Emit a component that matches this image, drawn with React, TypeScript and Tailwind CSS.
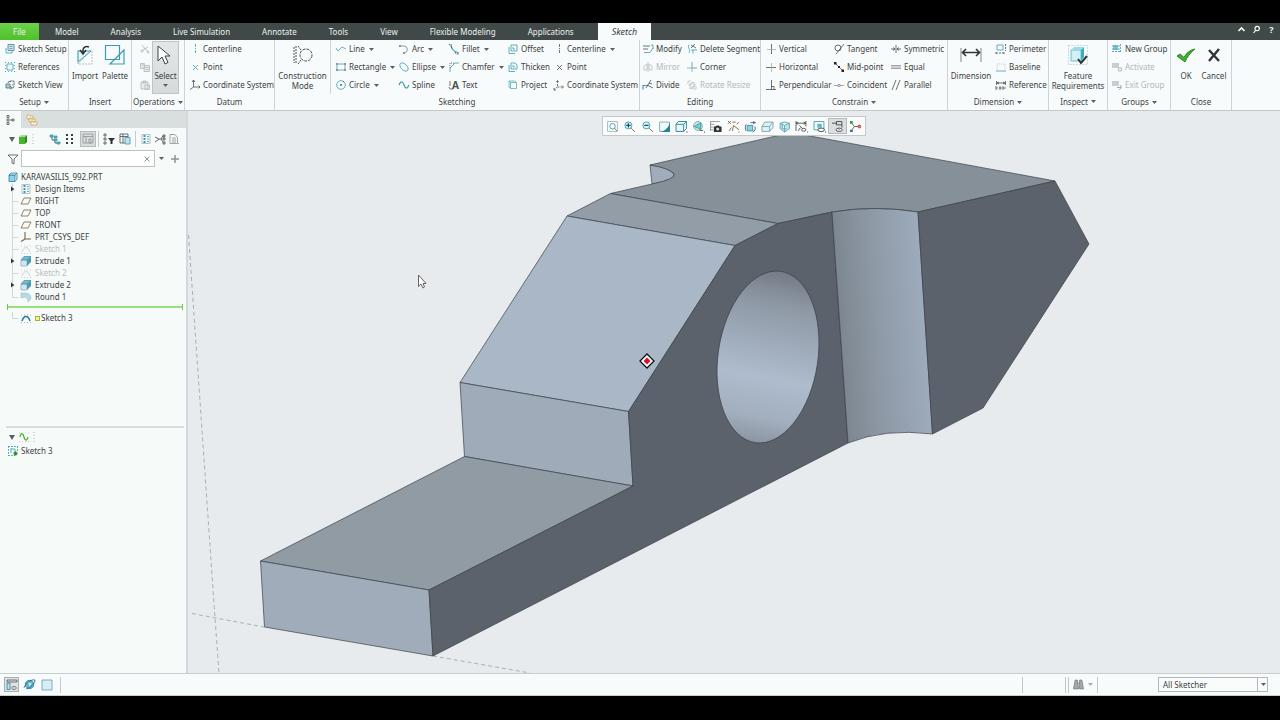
import { ReactNode, useState } from "react";
import clsx from "clsx";

const TEAL = "#3a9db3";
const INK = "#4a5052";
const PALE = "#b9bfc1";

const icons: Record<string, ReactNode> = {
  setup: (
    <g stroke="#54788a">
      <path d="M3 .5h6v6H3z" fill="#cfe6ee" />
      <path d="M1 4v5h6V7M4.500 2.500h3M4.500 4.500h3" stroke={TEAL} />
    </g>
  ),
  references: (
    <g stroke={TEAL}>
      <path d="M2 2h6v6H2z" />
      <path d="M0 9.500h10M.500 0v10M9.500 0v10M0 .500h10" strokeDasharray="1 2" />
    </g>
  ),
  sketchView: (
    <g stroke="#4b6f80">
      <path d="M1 4h4v4H1z" fill="#a9d3e0" />
      <path d="M5 1h4v4H7" />
      <path d="M3 3c0-2 2-2 3-1M7 8c2 0 2-1 2-2M5 6l2 2-2 1" stroke={INK} />
    </g>
  ),
  cut: <path d="M2 1l5 6M8 3L3 6M3 7a1 1 0 1 1-2 0a1 1 0 1 1 2 0M9 8a1 1 0 1 1-2 0a1 1 0 1 1 2 0" stroke="#a9aeb0" />,
  copy: <path d="M.500 1.500h4v5h-4zM5 3.500h4.500v6H4V5M5.500 5.500h3M5.500 7.500h3M2 3h2" stroke="#b3b8ba" fill="#e5e8e8" />,
  paste: <path d="M1 2h7v7H1zM3 1h3v2H3zM5 5h4.500v4.500H5z" stroke="#b3b8ba" fill="#e8ebeb" />,
  datumLine: <path d="M5.500 0v10" stroke={TEAL} strokeDasharray="3 1 1 1" />,
  datumPoint: <path d="M3 3l5 5M8 3L3 8" stroke={TEAL} />,
  csys: (
    <g stroke={INK}>
      <path d="M3.500 0v7H10M3.500 7L0 9.500" />
      <path d="M2 2l1.500-2L5 2M8.500 5.500L10 7 8.500 8.500" />
    </g>
  ),
  csysDots: (
    <g stroke={INK}>
      <path d="M3.500 1v6H9M3.500 7L0 9.500" strokeDasharray="2 1" />
      <path d="M2.500 2l1-1.500L4.500 2M8 5.500L9.500 7 8 8.500M0 8v2h2" />
    </g>
  ),
  line: <path d="M0 4l2 3 4-4 4 2" stroke={TEAL} />,
  rectangle: (
    <g>
      <path d="M1 2h8v6H1z" stroke={TEAL} />
      <path d="M0 1h2v2H0zM8 1h2v2H8zM0 7h2v2H0zM8 7h2v2H8z" fill="#8d999c" />
    </g>
  ),
  circle: (
    <g stroke={TEAL}>
      <circle cx="5" cy="5" r="4.300" />
      <path d="M4 5h2M5 4v2M7 2l1-1" stroke={INK} />
    </g>
  ),
  arc: (
    <g>
      <path d="M1.500 2H5a3.500 3.500 0 0 1 1 6.800" stroke="#5b8c97" />
      <path d="M0 1h2v2H0zM4 8h2v2H4z" fill="#8d999c" />
    </g>
  ),
  ellipse: <ellipse cx="5" cy="5" rx="5" ry="3" transform="rotate(45 5 5)" stroke={TEAL} />,
  spline: <path d="M0 5c2-5 4-3 5 0s3 5 5 0" stroke={TEAL} strokeWidth="1.200" />,
  fillet: (
    <g>
      <path d="M2 0c0 5 3 8 8 9" stroke={TEAL} strokeWidth="1.100" />
      <path d="M0 0l3 4M6 8l1 2h3" stroke={INK} strokeDasharray="2 1" />
    </g>
  ),
  chamfer: (
    <g>
      <path d="M1 10V6l5-5h4" stroke={TEAL} />
      <path d="M1 6V1h5" stroke={INK} strokeDasharray="1 1" />
    </g>
  ),
  text: (
    <g>
      <path d="M1 1v5M1 9h3M0 7l1 2" stroke={INK} />
      <text x="3" y="9" fontSize="10" fontWeight="700" fill={INK}>
        A
      </text>
    </g>
  ),
  offset: <path d="M3 1h6v6H3zM1 3v6.500h6M5 3v2h2" stroke={TEAL} />,
  thicken: <path d="M3 1h4a3 3 0 0 1 2 3v3H3zM1 3v6.500h6M5 3v2h2" stroke={TEAL} />,
  project: <path d="M2.500 2.500h6v6h-6zM2.500 2.500L1 1h6l1.500 1.500M1 1v6l1.500 1.500" stroke="#5bb3b3" />,
  centerline: <path d="M5.500 0v10" stroke={INK} strokeDasharray="3 1 1 1" />,
  point: <path d="M3 3l5 5M8 3L3 8" stroke={INK} />,
  modify: (
    <g>
      <path d="M0 2h7M0 5h5" stroke={INK} />
      <path d="M1 8.500h6L10 4M8 1h2v4" stroke={TEAL} />
    </g>
  ),
  mirror: <path d="M5 0v10M4 2L1 4v4h3zM6 2l3 2v4H6z" stroke={PALE} />,
  divide: (
    <g>
      <path d="M0 9.500v-4h4" stroke={TEAL} strokeWidth="1.200" />
      <path d="M3 8L8 0M4 5l6 3M6 3l3 1" stroke={INK} />
    </g>
  ),
  deleteSegment: (
    <g>
      <path d="M2 1c-2 3 2 4 0 8M4 6h6M6 9.500V6" stroke={TEAL} />
      <path d="M4 4l4-4M4 1l5 3" stroke={INK} />
    </g>
  ),
  corner: (
    <g>
      <path d="M5 6V0M5 6h5" stroke={TEAL} />
      <path d="M0 6h5v4" stroke="#8aa1a6" />
    </g>
  ),
  rotateResize: <path d="M1 1h3M1 1v3M9 9H6M9 9V6M2 6a4 4 0 0 1 6-3M8 4a4 4 0 0 1-6 4M3 4h4v3H3z" stroke={PALE} />,
  vertical: (
    <g>
      <path d="M5.500 0v10" stroke={INK} />
      <path d="M1 5.500h9" stroke="#a5abad" />
    </g>
  ),
  horizontal: (
    <g>
      <path d="M0 5.500h10" stroke={INK} />
      <path d="M5.500 1v9" stroke="#a5abad" />
    </g>
  ),
  perpendicular: <path d="M0 9.500h10M5.500 0v9.500M5 6.500h3v3" stroke={INK} />,
  tangent: (
    <g stroke={INK}>
      <circle cx="4" cy="4" r="3" />
      <path d="M2 10L10 0" />
    </g>
  ),
  midPoint: (
    <g>
      <path d="M1 1l8 8" stroke={INK} />
      <path d="M0 0h2.500v2.500H0zM4 4h2v2H4zM7.500 7.500H10V10H7.500z" fill="#222" />
    </g>
  ),
  coincident: <path d="M0 5.500h4M6 5.500h4M4 4.500h2v2H4z" stroke="#8a9092" />,
  symmetric: <path d="M5 1v8M0 5h4M10 5H6M2 3.500l2 1.500-2 1.500M8 3.500L6 5l2 1.500" stroke={INK} />,
  equal: <path d="M0 3.500h10M0 6.500h10M0 5h10" stroke="#8c9294" />,
  parallel: <path d="M1 10L5 0M5 10L9 0" stroke={INK} />,
  perimeter: (
    <g>
      <path d="M1 1h6v5H1z" stroke={TEAL} />
      <path d="M0 9h8M9.500 0v7M0 8v2M8 8v2" stroke={INK} strokeDasharray="2 1" />
    </g>
  ),
  baseline: (
    <g>
      <path d="M0 9h10" stroke={TEAL} />
      <path d="M1 8V2h8v6" stroke="#b4babc" strokeDasharray="1 1" />
    </g>
  ),
  reference: (
    <g stroke={INK}>
      <path d="M.500 1v4M9.500 1v4M1 3h8M3 2L1 3l2 1M7 2l2 1-2 1" />
      <path d="M0 8h2M3 8h3M7 8h3M0 6v4M4 6v4M7 6v4" />
    </g>
  ),
  newGroup: (
    <g>
      <path d="M1 1h5v5H1z" fill="#7cc4d6" />
      <path d="M0 7.500h8M8.500 0v9M0 2h8M0 5h8" stroke={TEAL} strokeDasharray="2 1" />
    </g>
  ),
  activate: (
    <g>
      <path d="M0 1h7v5H0z" fill="#c9cdcf" />
      <circle cx="8" cy="7.500" r="1.700" stroke="#999fa1" />
    </g>
  ),
  exitGroup: (
    <g>
      <path d="M0 1h7v5H0z" fill="#c9cdcf" />
      <path d="M5 7.500h4M9 5v3L7 10" stroke="#8f9597" />
    </g>
  ),
  structure: <path d="M1 .500h2v2H1zM1 4h2v2H1zM1 7.500h2v2H1zM6 4h2v2H6zM4 5h2" stroke={INK} />,
  folders: <path d="M0 0h2l1 1h3v3H0zM2 3h2l1 1h3v3H2zM4 6h2l1 1h3v3H4z" stroke="#c9a96a" fill="#fff3d6" />,
  greenBox: (
    <g>
      <path d="M1 3h6v7H1z" fill="#4bb42d" />
      <path d="M1 3l2-2h6L7 3z" fill="#a5df8e" />
      <path d="M7 3l2-2v7l-2 2z" fill="#2f8a1c" />
    </g>
  ),
  dots: <path d="M5 0v10" stroke="#9ba1a3" strokeDasharray="1 2" />,
  tree: (
    <g>
      <path d="M0 1h3v2H0zM4 2h3v2H4zM4 5h3v2H4zM7 8h3v2H7z" fill="#5cb5aa" stroke={TEAL} />
      <path d="M2 3v3h2M5 7v2h2" stroke={INK} />
    </g>
  ),
  bullets: <path d="M1 0h2v2H1zM1 4h2v2H1zM1 8h2v2H1zM6 0h2v2H6zM6 4h2v2H6zM6 8h2v2H6z" fill="#393e40" />,
  columns: <path d="M0 0h10v9H0zM0 2.500h10M3 2.500V9M6 5h2v4H6z" stroke="#8f9597" />,
  treeFilter: (
    <g>
      <path d="M0 0h2v2H0zM0 4h2v2H0zM0 8h2v2H0z" stroke={INK} />
      <path d="M4 4h7L8.500 7v3h-2V7z" fill="#333" />
    </g>
  ),
  treeColumns: (
    <g>
      <path d="M0 0h8v9H0zM0 2.500h8M3 0v9" stroke={INK} />
      <path d="M5 3.500h5V10H5z" fill="#bfe4ee" stroke={TEAL} />
    </g>
  ),
  design: (
    <g>
      <path d="M1 .500h8v9H1z" stroke="#a8b4b8" />
      <path d="M3.500 1v8" stroke={TEAL} strokeWidth="2" strokeDasharray="2 1" />
      <path d="M6 2.500h2M6 5h2M6 7.500h2" stroke={TEAL} />
    </g>
  ),
  network: <path d="M0 3l4 2-4 3M4 5h2M6 5l2-3M6 5l2 3M8 1h2v2H8zM8 4h2v2H8zM8 8h2v2H8z" stroke="#3e4345" />,
  page: <path d="M1 .500h5l2.500 3v6H1zM3 4h4M3 6h4M3 8h4M9 9.500h1" stroke="#8b9193" />,
  part: (
    <g stroke="#2c7fa6">
      <path d="M1 3h6v6.500H1z" fill="#8fd0ea" />
      <path d="M1 3l2-2h6L7 3zM9 1v6L7 9.500" fill="#d7f0f8" />
    </g>
  ),
  plane: <path d="M3 2h7L7 8H0z" stroke="#7b6647" />,
  sysTree: <path d="M4 0v7h6M4 7L0 9.500" stroke="#7b6647" strokeWidth="1.100" />,
  sketchOff: (
    <g stroke="#bfc5c5">
      <path d="M1 8c2-6 6-6 8 0" />
      <path d="M0 2h10M0 9.500h10" strokeDasharray="1 2" />
    </g>
  ),
  sketchOn: (
    <g>
      <path d="M1 8c2-6 6-6 8 0" stroke="#2377a8" strokeWidth="1.500" />
      <path d="M0 2h10M0 9.500h10" stroke="#9aa3a6" strokeDasharray="1 2" />
    </g>
  ),
  extrude: (
    <g>
      <path d="M0 4h6v6H0z" fill="#d3e6ef" stroke="#93b0bd" />
      <path d="M0 4l3-3.500h7L6 4z" fill="#66bdd6" stroke="#5f93a8" />
      <path d="M6 4l4-3.500V6l-4 4z" fill="#4a9bb5" />
    </g>
  ),
  round: <path d="M0 1h4c4 0 6 2 6 6L7 10c0-3-1-4-3-5L0 6z" fill="#b5dbea" stroke="#9bb4c0" strokeWidth="0.500" />,
  curve: (
    <g>
      <path d="M1 5c1-5 3-4 4 0s3 4 4 0" stroke="#45b02d" strokeWidth="1.200" />
      <path d="M0 1h10M0 9.500h10" stroke="#b5bcbc" strokeDasharray="1 2" />
    </g>
  ),
  sketchNew: (
    <g>
      <path d="M0 .500h10M0 9.500h7M.500 0v10M9.500 0v6" stroke={TEAL} strokeDasharray="2 1" />
      <path d="M3 2v5M3 3h4v3" stroke={TEAL} />
      <path d="M7.500 5.500v4M5.500 7.500h4" stroke="#2d8a1a" strokeWidth="2" />
    </g>
  ),
  funnel: <path d="M0 1h10L6 5v5L4 9V5z" stroke={INK} />,
  refit: (
    <g>
      <path d="M.500 .500h9v9h-9z" stroke="#a3b4b9" />
      <circle cx="5" cy="4.800" r="2.500" stroke={TEAL} />
      <path d="M6.800 6.600L9 9" stroke="#84643b" />
    </g>
  ),
  zoomIn: (
    <g>
      <circle cx="4" cy="4" r="3.200" stroke={TEAL} fill="#d9f2f6" />
      <path d="M6.500 6.500L10 10" stroke="#84643b" />
      <path d="M2 4h4M4 2v4" stroke="#174f66" strokeWidth="1.100" />
    </g>
  ),
  zoomOut: (
    <g>
      <circle cx="4" cy="4" r="3.200" stroke={TEAL} fill="#d9f2f6" />
      <path d="M6.500 6.500L10 10" stroke="#84643b" />
      <path d="M2 4h4" stroke="#174f66" strokeWidth="1.100" />
    </g>
  ),
  repaint: (
    <g>
      <path d="M.500 1h9v8.500h-9z" stroke="#84a7af" fill="#eef8fa" />
      <path d="M10 1v9H1c5-1 8-4 9-9z" fill="#24829c" />
    </g>
  ),
  display: (
    <g stroke="#1f7d97">
      <path d="M0 3h7v6.500H0z" fill="#e8f8fa" />
      <path d="M0 3l2-2.500h7.500L7 3M9.500 .500v6.500L7 9.500" />
      <path d="M9.500 10h1" stroke="#222" />
    </g>
  ),
  orient: (
    <g>
      <circle cx="4.500" cy="4.500" r="4" fill="#c9ebee" stroke="#7aa3aa" />
      <path d="M1 5l6-3.500v6z" stroke="#4a9bab" fill="#7cc9d2" />
      <path d="M6 8.500h3M10 10h1" stroke="#333" />
    </g>
  ),
  camera: (
    <g>
      <path d="M0 .500h9M0 3h4M0 5.500h3M0 8h3M.500 0v9" stroke="#8e9597" />
      <path d="M3.500 5H5l1-1h2l1 1h1.500v5h-7z" fill="#2e3335" />
      <circle cx="7" cy="7.300" r="1.400" fill="#ddd" />
    </g>
  ),
  datums: <path d="M0 0l2.500 2.500M2.500 0L0 2.500M4 1h3M4 9l1-5 5 4M1 9l2-3M8 3l2-2M9.500 10h1" stroke="#7a6038" />,
  spin: (
    <g>
      <path d="M2 4h5v5H2z" fill="#8fd1df" stroke="#3d8ba0" />
      <path d="M5 1.500h5M8 0v3M9 5c1 2 0 4-2 5M1 3C0 5 0 7 1 9" stroke="#3a5a65" />
    </g>
  ),
  slab: <path d="M0 5h7v4.500H0zM0 5l2.500-4H10L7 5M10 1v5L7 9.500" stroke="#76a5ae" fill="#dff1f4" />,
  cubeSlice: <path d="M1 2l4-1 4.500 1v5L5 10 1 7zM1 2l4 2 4.500-2M5 4v6M3 3v4h4" stroke="#5aa5b3" fill="#bfe5ea" />,
  annotations: (
    <g stroke={INK}>
      <path d="M0 0v9M9 0v5M0 2h9M2 1L0 2l2 1M7 1l2 1-2 1M3 4l3 3M2 9l2-3M10 10h1" />
      <ellipse cx="7" cy="8" rx="2" ry="1.300" />
    </g>
  ),
  visibility: (
    <g>
      <path d="M0 .500h9v7.500H0z" stroke={TEAL} />
      <path d="M3 2.500h4v3.500H3z" fill="#5db9c9" />
      <ellipse cx="6.500" cy="8" rx="3" ry="1.600" stroke="#333" fill="#fff" />
      <path d="M10 10h1" stroke="#222" />
    </g>
  ),
  sketchDisplay: (
    <g stroke="#3d4446">
      <path d="M0 2h4M4 .500h5v3H4zM9 3.500V6" />
      <ellipse cx="6.500" cy="8" rx="2.800" ry="1.500" fill="#fff" />
      <path d="M6 8h1" />
    </g>
  ),
  spinCenter: (
    <g>
      <path d="M1 1l3 4-3 4M4 5h4" stroke="#555" />
      <path d="M0 0h2.500v2.500H0z" fill="#3a9a4b" />
      <path d="M0 8h2.500v2H0z" fill="#2971b0" />
      <circle cx="8.500" cy="5" r="1.300" stroke="#b33a2c" fill="#d9867c" />
    </g>
  ),
  navToggle: (
    <g stroke="#51595c">
      <path d="M0 0h10v2H0z" fill="#ddd" />
      <path d="M0 3h3v6.500H0z" fill="#bde2ee" stroke="#387f9c" />
      <ellipse cx="7" cy="8" rx="2.300" ry="1.500" fill="#fff" />
      <path d="M6.500 8h1" />
    </g>
  ),
  browser: (
    <g>
      <circle cx="5" cy="5" r="3.800" fill="#6db6d4" stroke="#3a87a8" />
      <path d="M0 8C2 3 7 0 10 1c0 3-4 7-8 8" stroke="#22647f" />
      <path d="M4 3l3 1-2 3z" fill="#c8e8f3" />
    </g>
  ),
  fullScreen: <path d="M0 0h10v10H0z" stroke="#6b9bb0" fill="#d8edf5" />,
  binoculars: (
    <g fill="#a4aaac" stroke="#7c8385">
      <path d="M2 1h2l1 8H.500zM6 1h2l1.500 8H6z" />
      <path d="M4 4h2" />
    </g>
  ),
};

function Icon({ name, size = "size-[10px]" }: { name: string; size?: string }) {
  return (
    <svg viewBox="0 0 10 10" className={clsx("shrink-0 overflow-visible", size)} fill="none" strokeWidth="0.8" aria-hidden="true">
      {icons[name]}
    </svg>
  );
}

function Caret({ size = "h-[3px] w-[5px]", className }: { size?: string; className?: string }) {
  return (
    <svg viewBox="0 0 6 4" preserveAspectRatio="none" className={clsx("shrink-0", size, className)} aria-hidden="true">
      <path d="M0 0h6L3 4z" fill="#5a6062" />
    </svg>
  );
}

type ToolItem = { icon: string; label: string; menu?: boolean; off?: boolean };

function Tool({ icon, label, menu, off }: ToolItem) {
  return (
    <button
      type="button"
      disabled={off}
      className={clsx("flex h-[18px] items-center gap-[3px] whitespace-nowrap", off ? "text-[#b3b8ba]" : "hover:bg-[#dfe8ea]")}
    >
      <Icon name={icon} />
      <span>{label}</span>
      {menu && <Caret className="ml-px" />}
    </button>
  );
}

function Column({ items, className }: { items: ToolItem[]; className?: string }) {
  return (
    <div className={clsx("flex shrink-0 flex-col items-start", className)}>
      {items.map((item) => (
        <Tool key={item.label} {...item} />
      ))}
    </div>
  );
}

function BigTool({ lines, children, className }: { lines: string[]; children: ReactNode; className?: string }) {
  return (
    <button type="button" className={clsx("flex shrink-0 flex-col items-center pt-1 leading-[10px] hover:bg-[#dfe8ea]", className)}>
      <svg viewBox="0 0 22 22" className="mb-[5px] size-[22px]" fill="none" aria-hidden="true">
        {children}
      </svg>
      {lines.map((l) => (
        <span key={l}>{l}</span>
      ))}
    </button>
  );
}

function Group({ label, menu, className, children }: { label: string; menu?: boolean; className: string; children: ReactNode }) {
  return (
    <section aria-label={label} className={clsx("flex shrink-0 flex-col border-r border-[#cdd3d4]", className)}>
      <div className="flex h-[54px]">{children}</div>
      <div className="flex h-[17px] items-center justify-center gap-[3px]">
        {label}
        {menu && <Caret />}
      </div>
    </section>
  );
}

const tabs = ["Model", "Analysis", "Live Simulation", "Annotate", "Tools", "View", "Flexible Modeling", "Applications"];

function TabBar() {
  return (
    <nav className="flex h-[17px] shrink-0 items-stretch bg-[#404947] text-[#eef1f1]">
      <button type="button" className="w-[39px] bg-gradient-to-b from-[#6cd14a] to-[#4fc02c]">
        File
      </button>
      {tabs.map((t) => (
        <button key={t} type="button" className="px-4 hover:bg-[#56605e]">
          {t}
        </button>
      ))}
      <button type="button" className="ml-2 bg-[#f8fbfb] px-[14px] text-[9px] text-[#3c4244] italic">
        Sketch
      </button>
      <div className="ml-auto flex items-center gap-[6px] pr-1 pb-1">
        <button type="button" aria-label="Minimize the ribbon">
          <svg viewBox="0 0 9 9" className="size-[9px]" fill="none">
            <path d="M1.500 6l3-3 3 3" stroke="#fff" strokeWidth="1.600" />
          </svg>
        </button>
        <button type="button" aria-label="Search commands">
          <svg viewBox="0 0 9 9" className="size-[9px]" fill="none" stroke="#fff" strokeWidth="1.100">
            <circle cx="5.200" cy="3.600" r="2.200" />
            <path d="M3.600 5.400L1.500 8" />
          </svg>
        </button>
        <button type="button" className="w-[9px] text-[9px] leading-[9px] font-bold" aria-label="Help">
          ?
        </button>
      </div>
    </nav>
  );
}

function Ribbon() {
  return (
    <div className="flex h-[71px] shrink-0 overflow-hidden border-b border-[#c3c9ca] bg-[#f8fbfb]">
      <Group label="Setup" menu className="w-[69px]">
        <Column
          className="pl-[5px]"
          items={[
            { icon: "setup", label: "Sketch Setup" },
            { icon: "references", label: "References" },
            { icon: "sketchView", label: "Sketch View" },
          ]}
        />
      </Group>
      <Group label="Insert" className="w-[63px]">
        <BigTool lines={["Import"]} className="ml-[1px] w-[30px]">
          <path d="M4 6v14h14V6M4 20L18 5" stroke="#b5c1c4" strokeDasharray="2 1" />
          <path d="M4 7v11L17 7z" stroke={TEAL} fill="#e3f3f6" />
          <path d="M9 9V6c0-3 3-4 6-3M6 6l3 4 3-4" stroke="#333" strokeWidth="1.500" />
        </BigTool>
        <BigTool lines={["Palette"]} className="w-[30px]">
          <path d="M1.500 1.500h14v14h-14zM6 20L20 6v14z" stroke={TEAL} strokeWidth="1.200" />
        </BigTool>
      </Group>
      <Group label="Operations" menu className="w-[53px]">
        <div className="flex w-[18px] flex-col items-end">
          {["cut", "copy", "paste"].map((n) => (
            <button key={n} type="button" aria-label={n} disabled className="flex h-[18px] items-center">
              <Icon name={n} />
            </button>
          ))}
        </div>
        <button
          type="button"
          className="mt-px ml-[2px] flex w-[27px] flex-col items-center border border-[#bfc5c6] bg-gradient-to-b from-[#e3e7e7] to-[#d6dadb] leading-[10px]"
        >
          <svg viewBox="0 0 22 22" className="mt-[2px] mb-[5px] size-[22px]" fill="none" aria-hidden="true">
            <path d="M3 2v15l4-4 3 7 3-1.500-3-6.500h5z" fill="#fff" stroke="#3c4244" />
          </svg>
          <span>Select</span>
          <Caret className="mt-[3px]" />
        </button>
      </Group>
      <Group label="Datum" className="w-[90px]">
        <Column
          className="pl-[5px]"
          items={[
            { icon: "datumLine", label: "Centerline" },
            { icon: "datumPoint", label: "Point" },
            { icon: "csys", label: "Coordinate System" },
          ]}
        />
      </Group>
      <Group label="Sketching" className="w-[365px]">
        <BigTool lines={["Construction", "Mode"]} className="w-[56px] border-r border-[#cdd3d4]">
          <path d="M4 2v18M6 2l3 4M6 20l3-4M2 3v16" stroke={INK} strokeDasharray="2 1" />
          <circle cx="14" cy="11" r="6" stroke={INK} strokeDasharray="3 1" />
        </BigTool>
        <Column
          className="w-[68px] pl-[5px]"
          items={[
            { icon: "line", label: "Line", menu: true },
            { icon: "rectangle", label: "Rectangle", menu: true },
            { icon: "circle", label: "Circle", menu: true },
          ]}
        />
        <Column
          className="w-[50px]"
          items={[
            { icon: "arc", label: "Arc", menu: true },
            { icon: "ellipse", label: "Ellipse", menu: true },
            { icon: "spline", label: "Spline" },
          ]}
        />
        <Column
          className="w-[59px]"
          items={[
            { icon: "fillet", label: "Fillet", menu: true },
            { icon: "chamfer", label: "Chamfer", menu: true },
            { icon: "text", label: "Text" },
          ]}
        />
        <Column
          className="w-[46px]"
          items={[
            { icon: "offset", label: "Offset" },
            { icon: "thicken", label: "Thicken" },
            { icon: "project", label: "Project" },
          ]}
        />
        <Column
          items={[
            { icon: "centerline", label: "Centerline", menu: true },
            { icon: "point", label: "Point" },
            { icon: "csysDots", label: "Coordinate System" },
          ]}
        />
      </Group>
      <Group label="Editing" className="w-[121px]">
        <Column
          className="w-[47px] pl-[3px]"
          items={[
            { icon: "modify", label: "Modify" },
            { icon: "mirror", label: "Mirror", off: true },
            { icon: "divide", label: "Divide" },
          ]}
        />
        <Column
          items={[
            { icon: "deleteSegment", label: "Delete Segment" },
            { icon: "corner", label: "Corner" },
            { icon: "rotateResize", label: "Rotate Resize", off: true },
          ]}
        />
      </Group>
      <Group label="Constrain" menu className="w-[187px]">
        <Column
          className="w-[73px] pl-[5px]"
          items={[
            { icon: "vertical", label: "Vertical" },
            { icon: "horizontal", label: "Horizontal" },
            { icon: "perpendicular", label: "Perpendicular" },
          ]}
        />
        <Column
          className="w-[57px]"
          items={[
            { icon: "tangent", label: "Tangent" },
            { icon: "midPoint", label: "Mid-point" },
            { icon: "coincident", label: "Coincident" },
          ]}
        />
        <Column
          items={[
            { icon: "symmetric", label: "Symmetric" },
            { icon: "equal", label: "Equal" },
            { icon: "parallel", label: "Parallel" },
          ]}
        />
      </Group>
      <Group label="Dimension" menu className="w-[101px]">
        <BigTool lines={["Dimension"]} className="w-[46px]">
          <path d="M1 4v14M21 4v14" stroke="#7f8587" />
          <path d="M3 8.500h16M6 5L2.500 8.500 6 12M16 5l3.500 3.500L16 12" stroke="#2f3436" strokeWidth="1.600" />
        </BigTool>
        <Column
          className="pl-[2px]"
          items={[
            { icon: "perimeter", label: "Perimeter" },
            { icon: "baseline", label: "Baseline" },
            { icon: "reference", label: "Reference" },
          ]}
        />
      </Group>
      <Group label="Inspect" menu className="w-[59px]">
        <BigTool lines={["Feature", "Requirements"]} className="w-[58px]">
          <path d="M1.500 1.500h19v19h-19z" stroke="#a9b4b7" strokeDasharray="1 2" />
          <path d="M4 6h10v11H4z" fill="#d4eff5" stroke="#6fc0d2" />
          <path d="M4 6l3-3h10l-3 3z" fill="#9adbe7" />
          <path d="M14 6l3-3v10l-3 4z" fill="#3cabc3" />
          <path d="M11 15l3 4 6-7" stroke="#2f3436" strokeWidth="2" />
        </BigTool>
      </Group>
      <Group label="Groups" menu className="w-[63px]">
        <Column
          className="pl-1"
          items={[
            { icon: "newGroup", label: "New Group" },
            { icon: "activate", label: "Activate", off: true },
            { icon: "exitGroup", label: "Exit Group", off: true },
          ]}
        />
      </Group>
      <Group label="Close" className="w-[61px]">
        <BigTool lines={["OK"]} className="ml-px w-[28px]">
          <path d="M2 12l3-2 4 3.500C11 9 15 6 20 5c-5 4-8 8-10 13z" fill="#3fae35" stroke="#2d8a26" />
        </BigTool>
        <BigTool lines={["Cancel"]} className="w-[28px]">
          <path d="M6 6l10 11M16 5L6 17" stroke="#2f3436" strokeWidth="2.400" />
        </BigTool>
      </Group>
    </div>
  );
}

type Node = { label: string; icon: string; open?: boolean; off?: boolean };

const features: Node[] = [
  { label: "Design Items", icon: "design", open: true },
  { label: "RIGHT", icon: "plane" },
  { label: "TOP", icon: "plane" },
  { label: "FRONT", icon: "plane" },
  { label: "PRT_CSYS_DEF", icon: "sysTree" },
  { label: "Sketch 1", icon: "sketchOff", off: true },
  { label: "Extrude 1", icon: "extrude", open: true },
  { label: "Sketch 2", icon: "sketchOff", off: true },
  { label: "Extrude 2", icon: "extrude", open: true },
  { label: "Round 1", icon: "round" },
];

function TreeRow({ node, last }: { node: Node; last?: boolean }) {
  return (
    <li className={clsx("flex h-3 items-center", node.off && "text-[#b9bfbf]")}>
      <svg viewBox="0 0 14 12" className="h-3 w-[14px] shrink-0" fill="none" aria-hidden="true">
        <path d={last ? "M5.500 0v6.500h6" : node.open ? "M5.500 0v12" : "M5.500 0v12M5.500 6.500h6"} stroke="#d3d8d8" />
        {node.open && <path d="M3.500 2.500v7L8 6z" fill="#33393b" stroke="#f6faf9" />}
      </svg>
      <Icon name={node.icon} />
      <span className="ml-[4px]">{node.label}</span>
    </li>
  );
}

function SideBar() {
  const [filter, setFilter] = useState("");
  return (
    <aside className="flex w-[188px] shrink-0 flex-col border-r-2 border-[#d3d8d9] bg-[#f6faf9]">
      <div className="flex h-[17px] shrink-0 bg-[#d9dfdf]">
        <button type="button" aria-label="Model tree" className="flex w-[21px] items-center justify-center bg-[#f6faf9]">
          <Icon name="structure" />
        </button>
        <button type="button" aria-label="Folder browser" className="flex w-[21px] items-center justify-center">
          <Icon name="folders" />
        </button>
      </div>
      <div className="mt-[3px] flex h-4 shrink-0 items-center pl-[9px]">
        <Caret size="h-[5px] w-[6px]" className="mr-[3px]" />
        <Icon name="greenBox" />
        <Icon name="dots" />
        <div className="ml-3 flex items-center gap-[5px]">
          <button type="button" aria-label="Tree view" className="flex">
            <Icon name="tree" />
          </button>
          <button type="button" aria-label="List view" className="flex">
            <Icon name="bullets" />
          </button>
          <button type="button" aria-label="Columns" className="flex h-4 w-4 items-center justify-center border border-[#b5babb] bg-[#d8dcdd]">
            <Icon name="columns" />
          </button>
        </div>
        <div className="ml-[2px] flex h-4 items-center gap-[6px] border-l border-[#c6cccd] pl-[5px]">
          <button type="button" aria-label="Tree filters" className="flex">
            <Icon name="treeFilter" />
          </button>
          <button type="button" aria-label="Tree columns" className="flex">
            <Icon name="treeColumns" />
          </button>
        </div>
        <div className="ml-[5px] flex h-4 items-center gap-1 border-l border-[#c6cccd] pl-[5px]">
          <button type="button" aria-label="Design items" className="flex">
            <Icon name="design" />
          </button>
          <button type="button" aria-label="References" className="flex">
            <Icon name="network" />
          </button>
          <button type="button" aria-label="Notes" className="flex">
            <Icon name="page" />
          </button>
        </div>
      </div>
      <div className="mt-[3px] flex h-[17px] shrink-0 items-center pl-2">
        <Icon name="funnel" />
        <div className="ml-[3px] flex h-[17px] w-[134px] items-center border border-[#bcc2c3] bg-white pr-1">
          <input
            aria-label="Filter tree"
            value={filter}
            onChange={(e) => setFilter(e.target.value)}
            className="h-full min-w-0 flex-1 bg-transparent px-1 outline-none"
          />
          <button type="button" aria-label="Clear filter" onClick={() => setFilter("")}>
            <svg viewBox="0 0 6 6" className="size-[6px]">
              <path d="M.500 .500l5 5M5.500 .500l-5 5" stroke="#8e9597" />
            </svg>
          </button>
        </div>
        <button type="button" aria-label="Filter options" className="ml-1">
          <Caret />
        </button>
        <button type="button" aria-label="Add filter" className="ml-[7px]">
          <svg viewBox="0 0 8 8" className="size-2">
            <path d="M4 0v8M0 4h8" stroke="#8e9597" strokeWidth="1.500" />
          </svg>
        </button>
      </div>
      <div className="mt-1 flex h-3 items-center pl-2">
        <Icon name="part" />
        <span className="ml-[3px]">KARAVASILIS_992.PRT</span>
      </div>
      <ul className="pl-[7px]">
        {features.map((node, i) => (
          <TreeRow key={node.label} node={node} last={i === features.length - 1} />
        ))}
      </ul>
      <div className="mt-px mr-[3px] ml-[7px] flex h-[6px] items-center border-x border-[#6cc94a]">
        <div className="h-[2px] w-full bg-[#97e07c]" />
      </div>
      <div className="mt-[2px] flex h-3 items-center pl-[7px]">
        <svg viewBox="0 0 14 12" className="h-3 w-[14px]" fill="none" aria-hidden="true">
          <path d="M5.500 0v6.500h6" stroke="#cfd5d5" />
        </svg>
        <Icon name="sketchOn" />
        <span className="mr-[1px] ml-1 size-[5px] border border-[#a9b52a] bg-[#eef39a]" />
        <span>Sketch 3</span>
      </div>
      <div className="mt-[102px] mr-[2px] ml-[6px] h-[2px] shrink-0 bg-[#d9dddd]" />
      <div className="mt-[3px] flex h-3 items-center pl-[9px]">
        <Caret size="h-[5px] w-[6px]" className="mr-1" />
        <Icon name="curve" />
        <Icon name="dots" />
      </div>
      <div className="mt-[2px] flex h-3 items-center pl-2">
        <Icon name="sketchNew" />
        <span className="ml-[3px]">Sketch 3</span>
      </div>
    </aside>
  );
}

const viewTools = [
  "refit", "zoomIn", "zoomOut", "repaint", "display", "orient", "camera", "datums",
  "spin", "slab", "cubeSlice", "annotations", "visibility", "sketchDisplay", "spinCenter",
];

function Viewport() {
  return (
    <main className="relative min-w-0 flex-1 overflow-hidden bg-[#e7ebed]">
      <svg viewBox="188 111 1092 562" preserveAspectRatio="xMidYMid slice" className="absolute inset-0 h-full w-full" role="img" aria-label="Part model">
        <defs>
          <linearGradient id="notch" x1="832" y1="320" x2="925" y2="314" gradientUnits="userSpaceOnUse">
            <stop offset="0" stopColor="#7a838c" />
            <stop offset="0.500" stopColor="#8f9aa7" />
            <stop offset="1" stopColor="#9dabbc" />
          </linearGradient>
          <linearGradient id="bore" x1="771" y1="271" x2="763" y2="443" gradientUnits="userSpaceOnUse">
            <stop offset="0" stopColor="#747c85" />
            <stop offset="0.200" stopColor="#8f99a6" />
            <stop offset="0.620" stopColor="#aebccd" />
            <stop offset="0.850" stopColor="#a3afbf" />
            <stop offset="1" stopColor="#8c96a2" />
          </linearGradient>
        </defs>
        <path d="M188.500 235L215 618l4 55M192 613.500l72 13.500M433 656l97 17" stroke="#a3b3b3" strokeDasharray="4 3" fill="none" />
        <g stroke="#394047" strokeWidth="0.700" strokeLinejoin="round">
          <path d="M650 165Q668 167 674 174Q676 180 652 184z" fill="#a1abb9" />
          <path d="M650 165L791 132.500 1055 181 918 212Q875 205 832 212L778 223.500 610.500 193.500 652 184Q676 179 674.500 174Q669 168 650 165z" fill="#869099" />
          <path d="M610.500 193.500L778 223.500 735 245.500 567 216z" fill="#929da7" />
          <path d="M567 216L735 245.500 628.500 411.500 460 382.500z" fill="#aab7c6" />
          <path d="M460 382.500L628.500 411.500 633 486 464.500 456.500z" fill="#a0abb9" />
          <path d="M464.500 456.500L633 486 429 590 260.500 561z" fill="#919ba4" />
          <path d="M260.500 561L429 590 433 656 264.500 627z" fill="#a1acbb" />
          <path d="M735 245.500L778 223.500 832 212 848 443 433 656 429 590 633 486 628.500 411.500z" fill="#5b626b" />
          <path d="M832 212Q875 205 918 212L932.500 434Q885 428 848 443z" fill="url(#notch)" />
          <path d="M918 212L1055 181 1089 244 983 408 932.500 434z" fill="#5b626b" />
          <ellipse cx="768" cy="357" rx="49.900" ry="86.600" transform="rotate(8.500 768 357)" fill="url(#bore)" />
        </g>
        <path d="M647 354l7 7-7 7-7-7z" fill="#fff" stroke="#111" strokeWidth="1.300" />
        <path d="M647 357.500l3.500 3.500-3.500 3.500-3.500-3.500z" fill="#d3122a" />
        <path d="M418.500 275v11.500l2.500-2.500 2 4 1.500-1-1.500-3.500h3z" fill="#fff" stroke="#555" strokeWidth="0.900" />
      </svg>
      <div className="absolute top-[5px] left-1/2 flex h-[20px] w-[264px] -translate-x-1/2 items-center border border-[#c3c9ca] bg-[#fafcfc] px-[1px]">
        {viewTools.map((n) => (
          <button
            key={n}
            type="button"
            aria-label={n}
            className={clsx("flex h-4 flex-1 items-center justify-center", n === "sketchDisplay" && "border border-[#b5babb] bg-[#dadedf]")}
          >
            <Icon name={n} size="size-[11px]" />
          </button>
        ))}
      </div>
    </main>
  );
}

function StatusBar() {
  return (
    <footer className="flex h-[23px] shrink-0 items-center border-y border-[#c9cece] bg-[#f8fbfb]">
      <div className="flex items-center gap-[2px] pl-1">
        <button type="button" aria-label="Navigator" className="flex size-[15px] items-center justify-center border border-[#a9afb0] bg-[#dfe3e3]">
          <Icon name="navToggle" />
        </button>
        <button type="button" aria-label="Browser" className="flex size-4 items-center justify-center">
          <Icon name="browser" size="size-[11px]" />
        </button>
        <button type="button" aria-label="Full screen" className="flex size-4 items-center justify-center">
          <Icon name="fullScreen" />
        </button>
      </div>
      <div className="ml-[5px] h-4 border-l border-[#c3c9ca]" />
      <div className="ml-auto h-4 w-[44px] border-x border-[#c3c9ca]" />
      <button type="button" aria-label="Find" className="ml-[2px] flex h-4 w-[30px] items-center justify-center gap-1 border-x border-[#c3c9ca]">
        <Icon name="binoculars" size="size-[11px]" />
        <Caret className="opacity-50" />
      </button>
      <div className="relative mr-3 ml-[60px]">
        <select aria-label="Selection filter" className="block h-[15px] w-[110px] appearance-none border border-[#b3b9ba] bg-[#fafcfc] pl-1">
          <option>All Sketcher</option>
        </select>
        <div className="pointer-events-none absolute inset-y-0 right-0 flex w-[11px] items-center justify-center border-l border-[#b3b9ba]">
          <Caret />
        </div>
      </div>
    </footer>
  );
}

export default function App() {
  return (
    <div className="flex h-screen flex-col overflow-hidden bg-black pt-[23px] pb-6 font-['Noto_Sans','Open_Sans',sans-serif] text-[8px] leading-3 text-[#3c4244]">
      <TabBar />
      <Ribbon />
      <div className="flex min-h-0 flex-1">
        <SideBar />
        <Viewport />
      </div>
      <StatusBar />
    </div>
  );
}
